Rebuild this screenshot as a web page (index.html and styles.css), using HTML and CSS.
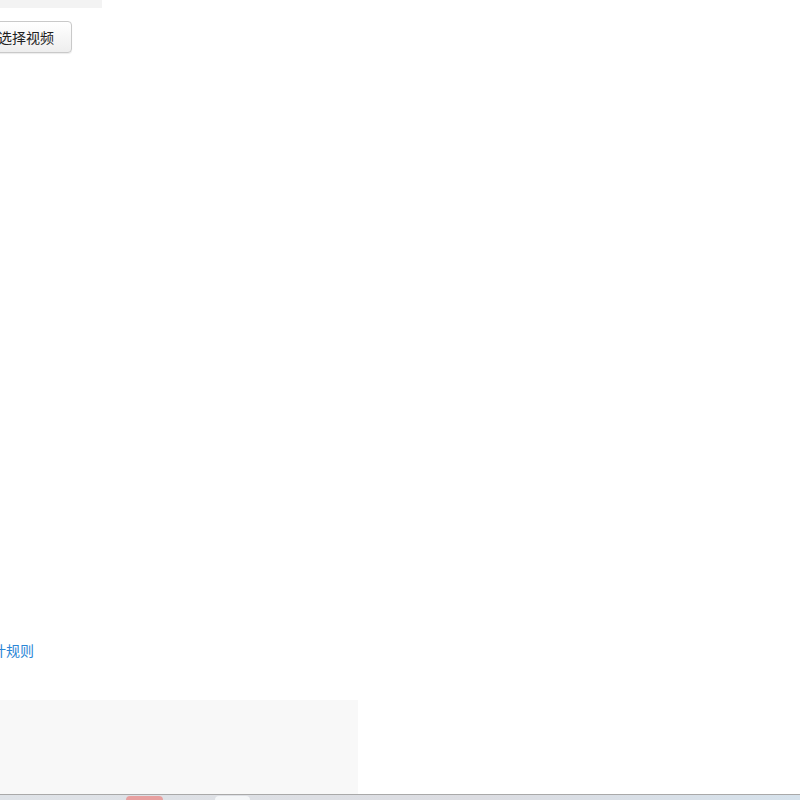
FILE: index.html
```html
<!DOCTYPE html>
<html lang="zh">
<head>
<meta charset="utf-8">
<title>选择视频</title>
<link rel="stylesheet" href="styles.css">
</head>
<body>
<div class="page">
  <div class="topbar"></div>
  <div class="upload">
    <button class="btn" type="button">选择视频</button>
  </div>
  <div class="spacer"></div>
  <a class="rule-link" href="#">设计规则</a>
  <div class="panel"></div>
</div>
<div class="taskbar">
  <span class="tab tab-red"></span>
  <span class="tab tab-white"></span>
</div>
</body>
</html>
```
FILE: styles.css
```css
html, body {
  margin: 0;
  padding: 0;
  background: #ffffff;
  height: 800px;
  overflow: hidden;
}
body {
  font-family: "Liberation Sans", "Noto Sans CJK SC", sans-serif;
  font-size: 14px;
  color: #333333;
  display: flex;
  flex-direction: column;
}
.page {
  flex: 1;
  display: flex;
  flex-direction: column;
}
.topbar {
  width: 102px;
  height: 8px;
  background: #f3f3f3;
}
.upload {
  margin-top: 13px;
  margin-left: -21px;
  height: 32px;
}
.btn {
  display: block;
  box-sizing: border-box;
  width: 93px;
  height: 32px;
  padding: 0 0 0 18px;
  border: 1px solid #c9c9c9;
  border-radius: 4px;
  background: linear-gradient(#ffffff, #eeeeee);
  font-family: "Noto Sans CJK SC", sans-serif;
  font-size: 14px;
  line-height: 30px;
  white-space: nowrap;
  color: #222222;
  text-align: left;
  box-shadow: 0 1px 1px rgba(0,0,0,0.08);
}
.spacer {
  height: 587px;
}
.rule-link {
  display: block;
  margin-left: -22px;
  font-family: "Noto Sans CJK SC", sans-serif;
  font-size: 14px;
  line-height: 20px;
  color: #2b86d6;
  text-decoration: none;
}
.panel {
  margin-top: 40px;
  width: 358px;
  flex: 1;
  background: #f8f8f8;
}
.taskbar {
  height: 5px;
  border-top: 1px solid #a9a9a9;
  background: linear-gradient(90deg, #dfe3e8, #dcdde2 60%, #d6e2ec);
  display: flex;
  align-items: flex-end;
}
.tab {
  display: block;
  height: 4px;
  border-radius: 4px 4px 0 0;
}
.tab-red {
  margin-left: 126px;
  width: 37px;
  background: #e8a0a0;
}
.tab-white {
  margin-left: 52px;
  width: 35px;
  background: #f4f6f8;
}
```
